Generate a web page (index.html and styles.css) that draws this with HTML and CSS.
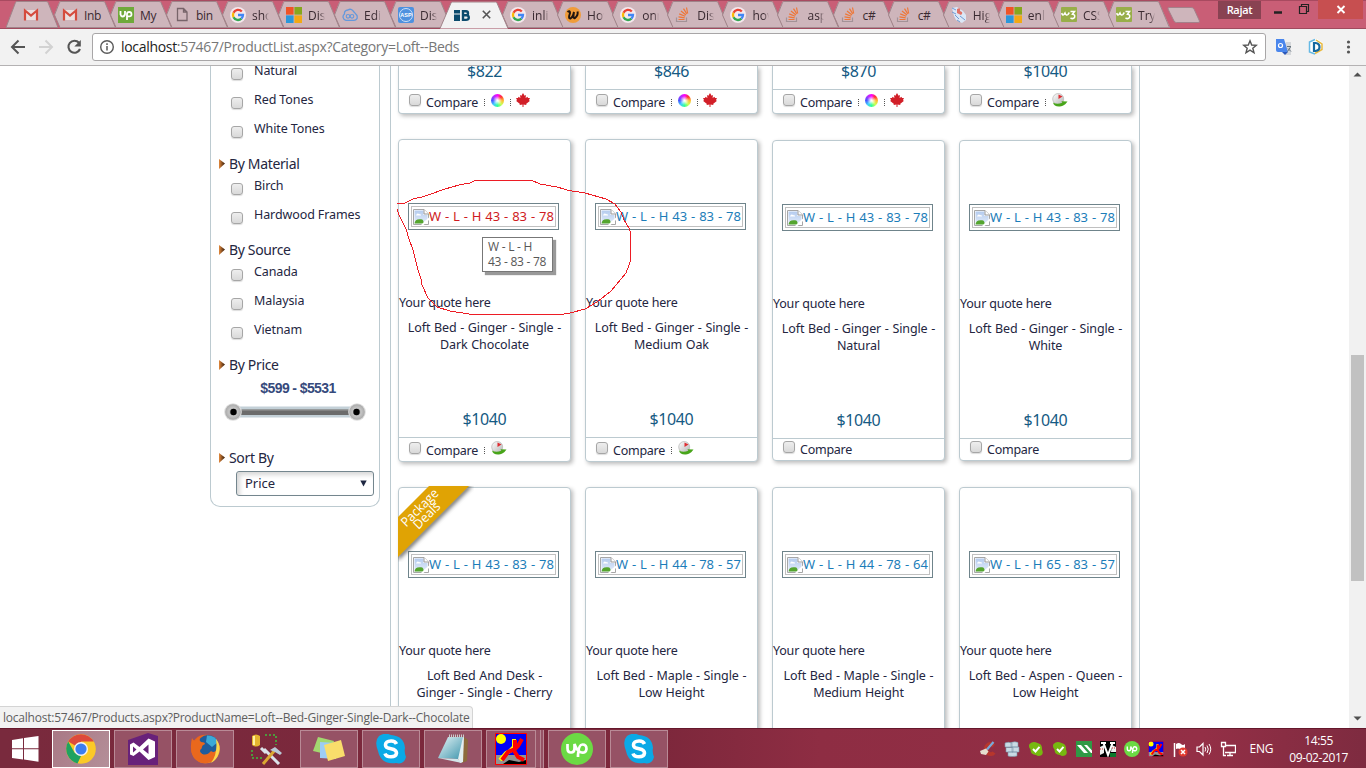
FILE: index.html
```html
<!DOCTYPE html>
<html lang="en">
<head>
<meta charset="utf-8">
<title>Product List</title>
<link rel="stylesheet" href="styles.css">
</head>
<body>
<svg class="defs" width="0" height="0">
  <defs>
    <linearGradient id="gSky" x1="0" y1="0" x2="0" y2="1"><stop offset="0" stop-color="#b4cbee"/><stop offset="1" stop-color="#e4edfb"/></linearGradient>
    <radialGradient id="gKnob"><stop offset="0" stop-color="#8d8d8d"/><stop offset=".55" stop-color="#c4c4c4"/><stop offset="1" stop-color="#a9a9a9"/></radialGradient>
    <linearGradient id="gBall" x1="0" y1="0" x2="1" y2="1"><stop offset="0" stop-color="#fff"/><stop offset="1" stop-color="#b5b5b5"/></linearGradient>
    <linearGradient id="gArrow"><stop offset="0" stop-color="#e58a3c"/><stop offset="1" stop-color="#2d1708"/></linearGradient>
    <linearGradient id="gFox" x1="0" y1="0" x2="1" y2="1"><stop offset="0" stop-color="#e8581c"/><stop offset=".6" stop-color="#ef7d1a"/><stop offset="1" stop-color="#fbd03b"/></linearGradient>
    <linearGradient id="gPad" x1="0" y1="0" x2="1" y2="1"><stop offset="0" stop-color="#e8f5f7"/><stop offset="1" stop-color="#3f96ad"/></linearGradient>
  </defs>
  <symbol id="tab" viewBox="0 0 68 28"><path d="M11.5 1.5H56.5L68 27.500H12L6.500 14.500Z" fill="#ceb5bb"/><path d="M12 27.500L6.500 15L11.500 2.500Q12 1.500 13 1.500H55Q56.500 1.500 57 2.500L67 26.500Q67.500 27.500 68 27.500" fill="none" stroke="#a08389"/><path d="M12 27.500H68" stroke="#a58b91"/></symbol>
  <symbol id="gmail" viewBox="0 0 16 16"><path d="M2 3H14V13H2Z" fill="#eadede"/><path d="M2 13.500V3.500L8 8.500L14 3.500V13.500" fill="none" stroke="#d54b3d" stroke-width="2.200"/></symbol>
  <symbol id="google" viewBox="0 0 16 16"><circle cx="8" cy="8" r="8" fill="#f5e9ee"/><g fill="none" stroke-width="2.300"><path d="M11.800 4.500A5 5 0 0 0 3.500 5.800" stroke="#ea4335"/><path d="M3.500 5.800A5 5 0 0 0 3.500 10.300" stroke="#fbbc05"/><path d="M3.500 10.300A5 5 0 0 0 11.400 11.600" stroke="#34a853"/><path d="M11.400 11.700Q13 10.200 13 8H8" stroke="#4285f4"/></g></symbol>
  <symbol id="ms" viewBox="0 0 16 16"><path d="M0 0H7.600V7.600H0Z" fill="#f05326"/><path d="M8.400 0H16V7.600H8.400Z" fill="#86a71d"/><path d="M0 8.400H7.600V16H0Z" fill="#2c97da"/><path d="M8.400 8.400H16V16H8.400Z" fill="#f2a914"/></symbol>
  <symbol id="so" viewBox="0 0 16 16"><path d="M1.500 10.500V14.500H11.500V10.500" fill="none" stroke="#a39297" stroke-width="1.200"/><g stroke="#ee7738" stroke-width="1.200"><path d="M3.500 12.500H9.500M3.500 9.800L9.700 10.800M4.200 6.900L10.200 9.300M6 4L11 8M8.500 1.700L11.800 6.800M11.500 .500L12.700 6.500"/></g></symbol>
  <symbol id="w3" viewBox="0 0 16 16"><rect width="16" height="15" rx="1" fill="#98ae49"/><path d="M.8 6Q1.300 8.800 3 7.500L4 6Q5 9 7 7.500L8.300 5.500M9.500 4.500H13.500L11.500 7.200Q14.500 7.500 13.500 10.500Q12 12.500 9.500 11" fill="none" stroke="#fff" stroke-width="1.500"/></symbol>
  <symbol id="file" viewBox="0 0 16 16"><path d="M3.500 1.500H9.500L13 5V13.500H3.500ZM9.500 1.500V5H13" fill="none" stroke="#77646a" stroke-width="1.300"/></symbol>
  <symbol id="cloud" viewBox="0 0 16 16"><path d="M4 13.300A3.500 3.500 0 0 1 2.500 7Q2 3.500 6 3Q9 .8 12 5Q13 6 15 8.500Q16 13 12 13.300Z" fill="none" stroke="#6498dc" stroke-width="1.300"/><circle cx="6" cy="9.300" r="1.800" fill="none" stroke="#6498dc" stroke-width="1.100"/><circle cx="10" cy="9.300" r="1.800" fill="none" stroke="#6498dc" stroke-width="1.100"/></symbol>
  <symbol id="asp" viewBox="0 0 16 16"><rect width="16" height="16" rx="2" fill="#4e91df"/><circle cx="8" cy="8" r="6.500" fill="none" stroke="#cfe0f6"/><text x="8" y="10.200" font-size="5.500" font-weight="700" text-anchor="middle" fill="#fff" font-family="Liberation Sans, sans-serif">ASP</text></symbol>
  <symbol id="check" viewBox="0 0 16 16"><path d="M1.500 3Q5-.5 9.500 2Q14.500 3 14 8.500Q16 13 13 14.500Q10 15.500 8 14Q2.500 13.500 2.500 8.500Q0 5.500 1.500 3Z" fill="#77b810"/><path d="M5 8L7.500 10.500L11.500 5.800" fill="none" stroke="#fff" stroke-width="2"/></symbol>
  <symbol id="broken" viewBox="0 0 16 16"><path d="M.5.5H11L15.500 5V15.500H.5Z" fill="#fff" stroke="#a6a6a6"/><path d="M1.500 1.500H10.500V6H14.500V10L9 14.500H1.500Z" fill="url(#gSky)"/><path d="M1.500 14.500Q2 9.500 8 10.300Q11 10.500 10.500 14.500Z" fill="#55a52f"/><path d="M3 6.500Q4 3.500 6 5Q8.500 5 8 6.500Z" fill="#fff"/><path d="M8 16L16 8.500V11L10.500 16Z" fill="#fff"/><path d="M11 .5V5H15.500" fill="#fff" stroke="#999"/></symbol>
  <symbol id="maple" viewBox="0 0 14 14"><path d="M7 0L8.600 2.700L10 2L9.600 5L11.500 3.800L12 5L14 5L13 7L13.800 8L10.300 10.700V12L7.500 11.500V14H6.500V11.500L3.700 12V10.700L.2 8L1 7L0 5H2L2.500 3.800L4.400 5L4 2L5.400 2.700Z" fill="#d21f28"/></symbol>
  <symbol id="source" viewBox="0 0 16 14"><circle cx="6.200" cy="6" r="5.500" fill="url(#gBall)" stroke="#b5b5b5" stroke-width=".7"/><path d="M6.500 1.500L10.500 3.500L6.500 6Z" fill="#df2b31"/><path d="M1 9.500Q2 14 8 13.500Q12.500 13 15.500 8.500L9.500 8.300L10.300 9.700Q5 12 1 9.500Z" fill="#48a51a"/></symbol>
  <symbol id="bullet" viewBox="0 0 6 10"><path d="M0 0L6 4.500L0 10Z" fill="url(#gArrow)"/></symbol>
  <symbol id="skype" viewBox="0 0 30 30"><path d="M3 2Q9-2 15 1Q28 2 29 14Q28 18 30 23Q28 31 20 29Q5 31 2 17Q-2 7 3 2Z" fill="#0ba9e6"/><path d="M20.500 10Q19 6.800 15 7Q9.300 7.200 9.500 11Q9.500 14 15 14.700Q20.500 15.700 20.500 19Q20 22.800 15 22.800Q10 22.800 9 19.500" fill="none" stroke="#fff" stroke-width="3.600"/></symbol>
  <symbol id="upw" viewBox="0 0 32 32"><circle cx="16" cy="16" r="16" fill="#6bda44"/><path d="M6.500 11V15Q6.500 19.500 10 19.500T13.500 15V11Q15.500 17 19 19Q25 21 25.500 16Q25.500 11.500 21.500 11.500T17 22V24" fill="none" stroke="#fff" stroke-width="2.700"/></symbol>
  <symbol id="bug" viewBox="0 0 32 32"><path d="M1 1H31V31H1Z" fill="#0000f8"/><path d="M1 22H31V31H1Z" fill="#929292"/><path d="M8 31L14 27L24 29L31 27V31Z" fill="#000"/><circle cx="6" cy="6" r="5" fill="#ff0"/><path d="M19 6V14L15 18L11 20L5 27" fill="none" stroke="#ff0" stroke-width="4"/><path d="M20 7V15M27 6L23 13L20 16L13 19L7 27M18 16L23 24L29 27" fill="none" stroke="#f00" stroke-width="4"/><path d="M.5.5H31.500V31.500H.5Z" fill="none" stroke="#f00"/></symbol>
</svg>

<header class="tabstrip">
  <div class="tabs">
    <div class="tab tab-pinned"><svg class="shape" preserveAspectRatio="none" viewBox="0 0 54 28"><path d="M0 27.500L9.500 2.500Q10 1.500 11 1.500H40Q41.500 1.500 42 2.500L52 27.500Z" fill="#ceb5bb" stroke="#a08389"/></svg><svg class="fav"><use href="#gmail"/></svg></div>
    <div class="tab"><svg class="shape"><use href="#tab"/></svg><svg class="fav"><use href="#gmail"/></svg><span class="full">Inb</span></div>
    <div class="tab"><svg class="shape"><use href="#tab"/></svg><svg class="fav" viewBox="0 0 16 16"><path d="M0 0H16V16H0Z" fill="#6fa93a"/><path d="M2.500 4V7.500Q3 9.500 4.700 9.500T7 7V4M9 13V7Q9 5 11.200 5T13.500 7.200T11.200 9.400H9" fill="none" stroke="#fff" stroke-width="1.800"/></svg><span class="full">My</span></div>
    <div class="tab"><svg class="shape"><use href="#tab"/></svg><svg class="fav"><use href="#file"/></svg><span class="full">bin</span></div>
    <div class="tab"><svg class="shape"><use href="#tab"/></svg><svg class="fav"><use href="#google"/></svg><span>sho</span></div>
    <div class="tab"><svg class="shape"><use href="#tab"/></svg><svg class="fav"><use href="#ms"/></svg><span>Dis</span></div>
    <div class="tab"><svg class="shape"><use href="#tab"/></svg><svg class="fav"><use href="#cloud"/></svg><span>Edi</span></div>
    <div class="tab"><svg class="shape"><use href="#tab"/></svg><svg class="fav"><use href="#asp"/></svg><span>Dis</span></div>
    <div class="tab tab-active"><svg class="shape" viewBox="0 0 68 28"><path d="M0 28L11 2.500Q11.500 1.500 12.500 1.500H55.500Q56.500 1.500 57 2.500L68 28Z" fill="#f2f2f2"/><path d="M0 28L11 2.500Q11.500 1.500 12.500 1.500H55.500Q56.500 1.500 57 2.500L68 28" fill="none" stroke="#a08389"/></svg><svg class="fav" viewBox="0 0 16 16"><path d="M0 3H6V6.500H0ZM0 7.500H6V14H0Z" fill="#0c4b6d"/><path d="M9 4.200H12Q14 4.200 14 6.200T12 8.300H9ZM9 8.300H12.500Q14.800 8.500 14.800 10.700T12 12.900H9Z" fill="none" stroke="#0c4b6d" stroke-width="2.400"/></svg><svg class="close" viewBox="0 0 9 9"><path d="M.8.800L8.200 8.200M8.200.800L.8 8.200" stroke="#555" stroke-width="1.600"/></svg></div>
    <div class="tab tab-b"><svg class="shape"><use href="#tab"/></svg><svg class="fav"><use href="#google"/></svg><span>inlin</span></div>
    <div class="tab tab-b"><svg class="shape"><use href="#tab"/></svg><svg class="fav" viewBox="0 0 16 16"><circle cx="8" cy="8" r="8" fill="#f09c3a"/><path d="M2.500 5Q5 3 5 6Q3 12 5.500 11.500Q8 10 9 5Q7.500 12 10 11Q13.500 8 12.500 4.500" fill="none" stroke="#201510" stroke-width="2"/></svg><span>How</span></div>
    <div class="tab tab-b"><svg class="shape"><use href="#tab"/></svg><svg class="fav"><use href="#google"/></svg><span>onn</span></div>
    <div class="tab tab-b"><svg class="shape"><use href="#tab"/></svg><svg class="fav"><use href="#so"/></svg><span>Dis</span></div>
    <div class="tab tab-b"><svg class="shape"><use href="#tab"/></svg><svg class="fav"><use href="#google"/></svg><span>hov</span></div>
    <div class="tab tab-b"><svg class="shape"><use href="#tab"/></svg><svg class="fav"><use href="#so"/></svg><span>asp</span></div>
    <div class="tab tab-b"><svg class="shape"><use href="#tab"/></svg><svg class="fav"><use href="#so"/></svg><span class="full">c#</span></div>
    <div class="tab tab-b"><svg class="shape"><use href="#tab"/></svg><svg class="fav"><use href="#so"/></svg><span class="full">c#</span></div>
    <div class="tab tab-b"><svg class="shape"><use href="#tab"/></svg><svg class="fav" viewBox="0 0 16 16"><path d="M1 1L6 0L12 4L15 8V13L11 16L5 13L3 9Z" fill="#dbe7f6"/><path d="M1 1L5 3M1 5L5 7M4 8L8 12M9 9L14 13M6 13L9 15" stroke="#6f9bd4"/><path d="M6 2Q10 0 9 4Q13 5 10 8L6 6Z" fill="#e27267"/></svg><span>Hig</span></div>
    <div class="tab tab-b"><svg class="shape"><use href="#tab"/></svg><svg class="fav"><use href="#ms"/></svg><span>enl</span></div>
    <div class="tab tab-b"><svg class="shape"><use href="#tab"/></svg><svg class="fav"><use href="#w3"/></svg><span>CSS</span></div>
    <div class="tab tab-b"><svg class="shape"><use href="#tab"/></svg><svg class="fav"><use href="#w3"/></svg><span>Try</span></div>
  </div>
  <svg class="newtab" viewBox="0 0 34 16"><path d="M2 .5H24Q26.500.5 27 2L32.500 14Q33 15.500 31 15.500H9.500Q7.500 15.500 7 14L1 2Q.6.500 2 .5Z" fill="#ceb5bb" stroke="#a4808a"/></svg>
  <div class="user">Rajat</div>
  <div class="wbtns">
    <svg width="57" height="20" viewBox="0 0 57 20"><path d="M13 12.500H21" stroke="#222" stroke-width="2.500"/><path d="M38.500 6.500H45.500V13.500H38.500ZM40.500 6V4.500H47.500V11.500H46" fill="none" stroke="#222" stroke-width="1.200"/></svg>
    <svg class="x" width="45" height="19" viewBox="0 0 45 19"><path d="M19.500 6L26.500 13M26.500 6L19.500 13" stroke="#fff" stroke-width="1.900"/></svg>
  </div>
</header>

<div class="toolbar">
  <svg class="nav" width="92" height="38" viewBox="0 0 92 38"><path d="M25 19H12.500M18.500 12.500L12 19L18.500 25.500" fill="none" stroke="#555" stroke-width="2"/><path d="M39 19H51.500M45.500 12.500L52 19L45.500 25.500" fill="none" stroke="#d2d2d2" stroke-width="2"/><path d="M79 14.800A6 6 0 1 0 80 21" fill="none" stroke="#555" stroke-width="2.100"/><path d="M80.800 12V18.500H74.300Z" fill="#555"/></svg>
  <div class="omni">
    <svg width="16" height="16" viewBox="0 0 16 16"><circle cx="8" cy="8" r="6.300" fill="none" stroke="#5a5a5a" stroke-width="1.400"/><path d="M8 7V11.500M8 4.300V5.900" stroke="#5a5a5a" stroke-width="1.500"/></svg>
    <div class="url"><b>localhost</b>:57467/ProductList.aspx?Category=Loft--Beds</div>
    <svg width="16" height="16" viewBox="0 0 16 16"><path d="M8 1.800L9.700 6L14.300 6.300L10.800 9.200L12 13.800L8 11.200L4 13.800L5.200 9.200L1.700 6.300L6.300 6Z" fill="none" stroke="#555" stroke-width="1.400"/></svg>
  </div>
  <svg class="ext" width="100" height="38" viewBox="0 0 100 38"><path d="M20 14H25V27H20L16 23Z" fill="#d5d7da"/><path d="M10 11H18L22 24H12Q10 24 10 22Z" fill="#4a86ec"/><path d="M16 24H22L19 27Z" fill="#2c58b8"/><circle cx="14.500" cy="17.500" r="2" fill="none" stroke="#fff" stroke-width="1.200"/><path d="M21 18.500H25M21.500 23.500L24.500 19M22 20.500L25 23.500" stroke="#66747f"/><path d="M51 11L57 15V22L50 26L44 24V13Z" fill="#fff"/><path d="M50 12L56 16V21.500L49 25.500" fill="none" stroke="#e8b83e" stroke-width="1.500"/><path d="M49 11.500L43.500 14V24L49 26" fill="none" stroke="#65b9e5" stroke-width="1.500"/><path d="M48 15V23H49.500Q53.500 22.500 53.500 19T49.500 15Z" fill="none" stroke="#1668a0" stroke-width="2.200"/><g fill="#555"><circle cx="82.500" cy="14" r="1.600"/><circle cx="82.500" cy="19" r="1.600"/><circle cx="82.500" cy="24" r="1.600"/></g></svg>
</div>

<main class="viewport">
  <div class="page">
    <aside class="filters">
      <label class="opt"><i class="cb"></i>Natural</label>
      <label class="opt"><i class="cb"></i>Red Tones</label>
      <label class="opt"><i class="cb"></i>White Tones</label>
      <h3><svg><use href="#bullet"/></svg>By Material</h3>
      <label class="opt"><i class="cb"></i>Birch</label>
      <label class="opt"><i class="cb"></i>Hardwood Frames</label>
      <h3><svg><use href="#bullet"/></svg>By Source</h3>
      <label class="opt"><i class="cb"></i>Canada</label>
      <label class="opt"><i class="cb"></i>Malaysia</label>
      <label class="opt"><i class="cb"></i>Vietnam</label>
      <h3><svg><use href="#bullet"/></svg>By Price</h3>
      <div class="range">$599 - $5531</div>
      <svg class="slider" viewBox="0 0 142 20"><path d="M9 4.500H133V15.500H9Z" fill="#c3d0d7"/><path d="M9 7.500H133V13H9Z" fill="#6b6b6b"/><path d="M9 8H133" stroke="#999"/><circle cx="9" cy="10" r="8.800" fill="#dedede"/><circle cx="133" cy="10" r="8.800" fill="#dedede"/><circle cx="9" cy="10" r="7.800" fill="url(#gKnob)"/><circle cx="133" cy="10" r="7.800" fill="url(#gKnob)"/><circle cx="9.500" cy="10" r="3.200"/><circle cx="132.500" cy="10" r="3.200"/></svg>
      <h3 class="sort"><svg><use href="#bullet"/></svg>Sort By</h3>
      <div class="select"><span>Price</span><svg width="7" height="7" viewBox="0 0 7 7"><path d="M.3.500H6.700L3.500 6.500Z" fill="#1e2742"/></svg></div>
    </aside>

    <section class="list">
      <div class="row row-cut">
        <article class="card cut"><div class="price">$822</div><footer><i class="cb"></i><span>Compare</span><i class="sep"></i><i class="wheel"></i><i class="sep"></i><svg class="leaf"><use href="#maple"/></svg></footer></article>
        <article class="card cut"><div class="price">$846</div><footer><i class="cb"></i><span>Compare</span><i class="sep"></i><i class="wheel"></i><i class="sep"></i><svg class="leaf"><use href="#maple"/></svg></footer></article>
        <article class="card cut"><div class="price">$870</div><footer><i class="cb"></i><span>Compare</span><i class="sep"></i><i class="wheel"></i><i class="sep"></i><svg class="leaf"><use href="#maple"/></svg></footer></article>
        <article class="card cut"><div class="price">$1040</div><footer><i class="cb"></i><span>Compare</span><i class="sep"></i><svg class="src"><use href="#source"/></svg></footer></article>
      </div>
      <div class="row">
        <article class="card"><a class="thumb hover"><span><svg><use href="#broken"/></svg><em>W - L - H 43 - 83 - 78</em></span></a><p class="quote">Your quote here</p><h2>Loft Bed - Ginger - Single -<br>Dark Chocolate</h2><div class="price">$1040</div><footer><i class="cb"></i><span>Compare</span><i class="sep"></i><svg class="src"><use href="#source"/></svg></footer></article>
        <article class="card"><a class="thumb"><span><svg><use href="#broken"/></svg><em>W - L - H 43 - 83 - 78</em></span></a><p class="quote">Your quote here</p><h2>Loft Bed - Ginger - Single -<br>Medium Oak</h2><div class="price">$1040</div><footer><i class="cb"></i><span>Compare</span><i class="sep"></i><svg class="src"><use href="#source"/></svg></footer></article>
        <article class="card low"><a class="thumb"><span><svg><use href="#broken"/></svg><em>W - L - H 43 - 83 - 78</em></span></a><p class="quote">Your quote here</p><h2>Loft Bed - Ginger - Single -<br>Natural</h2><div class="price">$1040</div><footer><i class="cb"></i><span>Compare</span></footer></article>
        <article class="card low"><a class="thumb"><span><svg><use href="#broken"/></svg><em>W - L - H 43 - 83 - 78</em></span></a><p class="quote">Your quote here</p><h2>Loft Bed - Ginger - Single -<br>White</h2><div class="price">$1040</div><footer><i class="cb"></i><span>Compare</span></footer></article>
      </div>
      <div class="row">
        <article class="card"><svg class="ribbon" viewBox="0 0 76 76"><path d="M0 74L74 0L69 0L0 69Z" fill="#444" class="blur"/><path d="M31 0H71L0 71V31Z" fill="#e0a304"/><g transform="rotate(-45 28 28)" fill="#fff" font-family="Open Sans, sans-serif" font-size="13" text-anchor="middle"><text x="28" y="23.500" textLength="47" lengthAdjust="spacingAndGlyphs">Package</text><text x="27.500" y="34" textLength="32" lengthAdjust="spacingAndGlyphs">Deals</text></g></svg><a class="thumb"><span><svg><use href="#broken"/></svg><em>W - L - H 43 - 83 - 78</em></span></a><p class="quote">Your quote here</p><h2>Loft Bed And Desk -<br>Ginger - Single - Cherry</h2></article>
        <article class="card"><a class="thumb"><span><svg><use href="#broken"/></svg><em>W - L - H 44 - 78 - 57</em></span></a><p class="quote">Your quote here</p><h2>Loft Bed - Maple - Single -<br>Low Height</h2></article>
        <article class="card"><a class="thumb"><span><svg><use href="#broken"/></svg><em>W - L - H 44 - 78 - 64</em></span></a><p class="quote">Your quote here</p><h2>Loft Bed - Maple - Single -<br>Medium Height</h2></article>
        <article class="card"><a class="thumb"><span><svg><use href="#broken"/></svg><em>W - L - H 65 - 83 - 57</em></span></a><p class="quote">Your quote here</p><h2>Loft Bed - Aspen - Queen -<br>Low Height</h2></article>
      </div>
    </section>
  </div>
  <div class="scroll">
    <svg width="9" height="5" viewBox="0 0 9 5"><path d="M.5 4.500L4.500.5L8.500 4.500Z" fill="#505050"/></svg>
    <div class="thumbbar"></div>
    <svg width="9" height="5" viewBox="0 0 9 5"><path d="M.5.500L4.500 4.500L8.500.500Z" fill="#505050"/></svg>
  </div>
  <div class="tip">W - L - H<br>43 - 83 - 78</div>
  <div class="status">localhost:57467/Products.aspx?ProductName=Loft--Bed-Ginger-Single-Dark--Chocolate</div>
</main>

<footer class="taskbar">
  <div class="start"><svg width="27" height="26" viewBox="0 0 27 26"><path d="M0 4L11 2.300V12.300H0ZM12 2.100L26.500 0V12.300H12ZM0 13.300H11V23.500L0 22ZM12 13.300H26.500V25.700L12 23.600Z" fill="#fff"/></svg></div>
  <div class="app on"><svg width="30" height="30" viewBox="0 0 30 30"><circle cx="15" cy="15" r="14.800" fill="#fbc927"/><path d="M15 15L2.200 7.600A14.800 14.800 0 0 1 27.800 7.600H15Z" fill="#dd4a3c"/><path d="M2.200 7.600L8.600 18.700L15 22L11.500 29.400A14.800 14.800 0 0 1 2.200 7.600Z" fill="#1fa261"/><circle cx="15" cy="15" r="7" fill="#f3f3f3"/><circle cx="15" cy="15" r="5.600" fill="#3c7df0"/></svg></div>
  <div class="app"><svg width="30" height="32" viewBox="0 0 30 32"><path d="M0 7L20 0L30 3V32H0Z" fill="#68217a"/><path d="M2 11.500L5.500 9.500L11.500 14L20.500 5.500L27 8.500V24L20.500 27L11.500 18.500L5.500 23L2 21.500ZM5 13.500V19.500L8.500 16.500ZM20.500 11.500L15 16.500L20.500 21Z" fill="#fff" fill-rule="evenodd"/></svg></div>
  <div class="app"><svg width="30" height="30" viewBox="0 0 30 30"><circle cx="15.500" cy="15" r="14.300" fill="url(#gFox)"/><circle cx="18" cy="11.500" r="10.500" fill="#1f5c9c"/><path d="M17 1.500Q25 1 28 8L22 13L16 8Z" fill="#3ba9d8"/><path d="M2 4Q4 8 6 6Q8 3 10 3Q8.500 6 11 8Q15 8 15 10Q11 12 12 14Q8 17 12 20Q17 22 21 17Q25 20 27 14Q29 24 21 28Q11 32 4 24Q-1 16 2 4Z" fill="#e9681d"/><path d="M26 5Q31 11 29 18Q27 26 21 29Q28 20 26 5Z" fill="#fcd74d"/></svg></div>
  <div class="app plain"><svg width="32" height="32" viewBox="0 0 32 32"><path d="M1 3Q5 0 9 3V12Q5 15 1 12Z" fill="#e5b52f"/><path d="M2 3H4V12H2Z" fill="#fff2a0"/><path d="M14 2H25V12M1 17V25H11" fill="none" stroke="#3fbf3d" stroke-width="1.500" stroke-dasharray="2 2"/><path d="M13 16L28 31M10 15L15 20" stroke="#dce3ea" stroke-width="3"/><path d="M12 31L24 17" stroke="#dba832" stroke-width="3"/><path d="M19 17L24 14L31 20L29 22L24 19" fill="#b9c8d6"/></svg></div>
  <div class="app"><svg width="34" height="28" viewBox="0 0 34 28"><path d="M6 2L22 6L18 20L1 16Z" fill="#a3d870"/><path d="M8 7L24 8V24L8 23Z" fill="#9dcdf3"/><path d="M12 10L29 5L33 21L16 26Z" fill="#f9de6b"/></svg></div>
  <div class="app"><svg width="30" height="30"><use href="#skype"/></svg></div>
  <div class="app"><svg width="32" height="30" viewBox="0 0 32 30"><path d="M27 3L31 6L30 27L25 29Z" fill="#8d6a3c"/><path d="M11 3L27 3L26 28L23 29Z" fill="#e3eef0"/><path d="M11 3H26L21 25L1 24Z" fill="url(#gPad)"/><path d="M1 24L21 25L25 29L20 28Z" fill="#d3e5e9"/><path d="M12 2H27" stroke="#ccc" stroke-width="3" stroke-dasharray="1 1"/></svg></div>
  <div class="app multi"><svg width="32" height="32"><use href="#bug"/></svg></div>
  <div class="app"><svg width="32" height="32"><use href="#upw"/></svg></div>
  <div class="app"><svg width="30" height="30"><use href="#skype"/></svg></div>
  <div class="tray">
    <svg viewBox="0 0 16 16"><path d="M15 3.500Q12 0 8 1.500Q3.500 4 4 9Q5.500 15 11 15Q14 15 15.500 12.500L12.500 10.500Q10.500 12 8.500 10Q7 7 9.500 5.500Q11.500 4.500 12.500 6.500Z" fill="#b7362c"/><path d="M13.500 1L7 8.500" stroke="#78aadb" stroke-width="2.200"/><path d="M0 10L6 7.500L8.500 10.500L6 14L1 13Z" fill="#e5dfcf"/></svg>
    <svg viewBox="0 0 16 16"><g fill="#c9dbe5" stroke="#7995a8" stroke-width=".6"><path d="M1 2Q4 .5 8 2V6H1ZM7 1.500Q11 0 14 1.500V6H7ZM2 6.500H9V11H2ZM8 6H15V11H8ZM4 11H13V15Q8 16 4 15Z"/></g></svg>
    <svg viewBox="0 0 16 16"><use href="#check"/></svg>
    <svg viewBox="0 0 16 16"><use href="#check"/></svg>
    <svg viewBox="0 0 16 16"><path d="M0 0H16V16H0Z" fill="#2f9945"/><path d="M1 4H5L12 12H8ZM8 4H11L16 9.500V12H15Z" fill="#fff"/></svg>
    <svg viewBox="0 0 16 16"><path d="M0 0H16V16H0Z" fill="#000"/><path d="M0 6L4 4V12L0 14ZM12 4L16 6V11H11Z" fill="#eee"/><path d="M1 2H6M10 2H15M3.500 2L8 14L12.500 2" fill="none" stroke="#fff" stroke-width="2"/><path d="M0 8H4M12 7H16" stroke="#c22" stroke-dasharray="1 1"/><path d="M10 12H16V16H10Z" fill="#0a7a2c"/></svg>
    <svg><use href="#upw"/></svg>
    <svg><use href="#bug"/></svg>
    <svg viewBox="0 0 16 16"><path d="M2.500 2V16" stroke="#fff" stroke-width="1.500"/><path d="M4 3Q7 1 9 3Q11 5 13 3V9Q10 10 8 8Q6 7 4 8Z" fill="#fff"/><circle cx="11" cy="11" r="4.500" fill="#e23b30"/><path d="M9 9L13 13M13 9L9 13" stroke="#fff" stroke-width="1.500"/></svg>
    <svg viewBox="0 0 16 16"><path d="M1 6H3.500L7 2.500V14L3.500 10.500H1Z" fill="none" stroke="#fff" stroke-width="1.200"/><path d="M9 6Q10.500 8 9 10.500M11 4.500Q13.500 8 11 12M13 3Q16.500 8 13 13.500" fill="none" stroke="#fff"/></svg>
    <svg viewBox="0 0 16 16"><path d="M6 4.500H15.500V11.500H5M10 12V14.500M7 14.500H13M1.500 1.500H5.500V5.500H1.500ZM3.500 5.500V14.500H6" fill="none" stroke="#fff" stroke-width="1.300"/></svg>
  </div>
  <div class="lang">ENG</div>
  <div class="clock">14:55<br>09-02-2017</div>
</footer>

<svg class="scribble" viewBox="0 0 1366 768"><path d="M397 203.500H404L413 199L424 196.500L445 189L459 185L470 183L475 180.500H532L540 184L557 187L569 190.500L585 193L606 199L615 204L621 212L624 220L629 228L630.500 233V261L626 273L621 279L611 291L597 302L585 309L570 313L561 314.500H472L450 311L437 307L428 298L422 285L421 279L418 270L413 250L409 239L406 229L399 215L397 209" fill="none" stroke="#ed1c24"/></svg>
</body>
</html>
```
FILE: styles.css
```css
* { box-sizing: border-box; }
body { margin: 0; width: 1366px; height: 768px; overflow: hidden; display: flex; flex-direction: column; font-family: "Noto Sans", "Open Sans", sans-serif; background: #fff; color: #24263f; position: relative; }
.defs { position: absolute; }
i, em { font-style: normal; }

/* Window frame and tabs */
.tabstrip { height: 29px; flex: none; display: flex; background: #c95e76; border-top: 1px solid #a84a60; padding-left: 6px; box-shadow: inset 0 -1px #a04a5e; font-family: "Open Sans", sans-serif; }
.tabs { display: flex; height: 28px; width: 1162px; flex: none; }
.tab { position: relative; width: 56px; flex: none; padding: 6px 0 0 14px; display: flex; gap: 6px; }
.tab-pinned { width: 42px; padding-left: 17px; }
.tab-b { width: 55.100px; }
.tab .shape { position: absolute; left: 0; top: -1px; width: 68px; height: 28px; }
.tab-pinned .shape { width: 54px; }
.tab-active { width: 56px; z-index: 2; }
.tab-active .shape { height: 29px; }
.fav { position: relative; width: 16px; height: 16px; flex: none; }
.tab span { position: relative; width: 17px; overflow: hidden; white-space: nowrap; font-size: 12px; line-height: 17px; color: #3a2a31; -webkit-mask-image: linear-gradient(90deg, #000 70%, transparent); mask-image: linear-gradient(90deg, #000 70%, transparent); }
.tab .full { width: auto; overflow: visible; letter-spacing: -.3px; -webkit-mask-image: none; mask-image: none; }
.close { position: relative; width: 9px; height: 9px; margin: 3px 0 0 6px; flex: none; }
.newtab { width: 34px; height: 16px; margin: 6px 0 0 -1px; flex: none; }
.user { width: 43px; height: 18px; margin-left: 17px; background: #894252; color: #fff; font-size: 11px; font-weight: 600; line-height: 17px; letter-spacing: -.3px; text-align: center; }
.wbtns { display: flex; align-items: flex-start; }
.wbtns svg { margin-top: -1px; }
.wbtns .x { background: #c74f50; }

.toolbar { height: 37px; flex: none; display: flex; align-items: flex-start; background: #f2f2f2; border-bottom: 1px solid #b4b2b3; }
.nav, .ext { margin-top: -1px; flex: none; }
.omni { width: 1174px; height: 28px; margin-top: 4px; display: flex; align-items: center; gap: 6px; padding: 0 7px 0 6px; border: 1px solid #a8a6a7; border-radius: 3px; background: #fff; flex: none; }
.url { flex: 1; font: 14px/26px "Open Sans", sans-serif; color: #777; letter-spacing: -.31px; }
.url b { font-weight: 400; color: #222; }

/* Page */
.viewport { position: relative; height: 662px; flex: none; display: flex; overflow: hidden; background: #fff; }
.page { width: 1349px; display: flex; align-items: flex-start; padding-left: 210px; gap: 10px; }
.filters { width: 170px; height: 451px; margin-top: -10px; border: 1px solid #bccad0; border-top: 0; border-radius: 0 0 10px 10px; padding: 0 5px 0 8px; font-size: 12.500px; letter-spacing: -.1px; }
.opt { height: 29px; display: flex; align-items: center; gap: 11px; padding-left: 12px; }
.cb { width: 12px; height: 12px; flex: none; border: 1px solid #a6a6a6; border-radius: 3px; background: linear-gradient(#eee, #d9d9d9); box-shadow: 0 1px 1px #ddd; }
.opt .cb { margin-top: 6px; }
h3 { height: 28px; margin: 0; padding-top: 14px; display: flex; gap: 4px; align-items: center; font-size: 14px; font-weight: 400; line-height: 14px; letter-spacing: -.35px; }
h3 svg { width: 6px; height: 10px; }
.range { margin: 6px 0 4px 3px; height: 20px; font: bold 14px/20px "Liberation Sans", sans-serif; color: #364a7c; text-align: center; letter-spacing: -.6px; }
.slider { display: block; width: 142px; height: 20px; margin-left: 5px; }
.sort { margin-top: 16px; padding-top: 12px; }
.select { width: 138px; height: 25px; margin: 5px 0 0 17px; padding: 0 6px 1px 8px; display: flex; justify-content: space-between; align-items: center; border: 1px solid #74868e; border-radius: 3px; box-shadow: inset 3px 3px 4px #d8d8d8; font-size: 13px; letter-spacing: 0; }

.list { width: 750px; height: 662px; border: solid #bccad0; border-width: 0 1px; padding-left: 7px; }
.row { display: flex; gap: 14px; height: 323px; margin-bottom: 25px; }
.row-cut { height: 48px; }
.card { position: relative; width: 173px; height: 323px; border: 1px solid #bccad0; border-radius: 4px; box-shadow: 2px 2px 4px #bbb; display: flex; flex-direction: column; background: #fff; flex: none; }
.cut { height: 48px; border-top: 0; border-radius: 0 0 4px 4px; }
.low { margin-top: 1px; height: 321px; }
.thumb { display: block; width: 151px; height: 27px; margin: 63px 0 0 9px; padding: 2px; border: 1px solid #6f848b; }
.thumb > span { display: flex; height: 21px; padding: 1px; border: 1px solid #c0c0c0; color: #1c7db9; overflow: hidden; }
.thumb svg { width: 16px; height: 16px; margin-top: 1px; flex: none; }
.thumb em { font-size: 13px; line-height: 17px; white-space: nowrap; word-spacing: .500px; }
.hover > span { color: #cf1b22; }
.quote { margin: 63px 0 6px; font-size: 12.500px; line-height: 20px; letter-spacing: -.2px; }
h2 { margin: 0; height: 34px; font-size: 12.500px; line-height: 17px; font-weight: 400; text-align: center; white-space: nowrap; letter-spacing: -.1px; word-spacing: .500px; }
.price { margin: 56px 0 8px; height: 20px; font-size: 16px; line-height: 20px; letter-spacing: -.4px; text-align: center; color: #155a83; }
.cut .price { margin: -5px 0 8px; }
.card footer { height: 24px; border-top: 1px solid #bccad0; display: flex; align-items: flex-start; padding-left: 10px; font-size: 12.500px; letter-spacing: -.25px; }
footer .cb { margin: 4px 5px 0 0; }
.card footer span { width: 55px; line-height: 26px; }
.low footer span { line-height: 22px; }
.low footer .cb { margin-top: 2px; }
.sep { width: 1px; height: 7px; margin: 9px 0 0 3px; background: repeating-linear-gradient(#555 0 1px, transparent 1px 2px); }
.wheel { width: 13px; height: 13px; margin: 4px 3px 0 6px; border-radius: 50%; background: radial-gradient(circle, #fff 5%, transparent 50%), conic-gradient(#f0f, #f33, #fb3, #cf5, #3f9, #4cf, #45f, #a3f, #f0f); }
.leaf { width: 14px; height: 14px; margin: 3px 0 0 5px; }
.src { width: 16px; height: 14px; margin: 3px 0 0 6px; }
.ribbon { position: absolute; left: -1px; top: -2px; width: 76px; height: 76px; }
.blur { filter: blur(2px); }

.scroll { width: 17px; display: flex; flex-direction: column; align-items: center; background: #f1f1f1; padding: 6px 0 7px; }
.thumbbar { width: 13px; height: 226px; margin: 278px 0 auto; background: #c1c1c1; }
.tip { position: absolute; left: 482px; top: 171px; width: 71px; height: 35px; padding: 1px 5px; border: 1px solid #777; background: #fff; box-shadow: 3px 3px 1px #999; color: #575757; font: 12px/15px "Open Sans", sans-serif; letter-spacing: -.3px; word-spacing: .100px; white-space: nowrap; }
.status { position: absolute; left: 0; bottom: 0; width: 473px; height: 22px; padding-left: 3px; border: 1px solid #d4d4d4; border-width: 1px 1px 0 0; border-radius: 0 4px 0 0; background: #f2f2f2; color: #5e5e5e; font: 12px/21px "Open Sans", sans-serif; letter-spacing: -.22px; white-space: nowrap; }

/* Taskbar */
.taskbar { height: 40px; flex: none; display: flex; align-items: center; background: linear-gradient(90deg, #792a3d, #7c273b 48%, #8e2d43 60%, #942f46 88%, #7e2b40); border-top: 1px solid #65182c; color: #fff; font-family: "Open Sans", sans-serif; }
.start { width: 52px; padding-left: 12px; display: flex; }
.app { width: 58px; height: 38px; margin-right: 4px; flex: none; display: flex; align-items: center; justify-content: center; background: #965265; border: 1px solid #b98a96; }
.on { background: linear-gradient(120deg, #a97885, #b48f99); border: 1px solid #fff; }
.plain { background: none; border-color: transparent; }
.app.multi { width: 50px; margin-right: 12px; box-shadow: 4px 0 #965265, 5px 0 #b98a96, 7px 0 #965265, 8px 0 #b98a96; }
.tray { display: flex; gap: 8.100px; margin-left: 308px; }
.tray svg { width: 16px; height: 16px; flex: none; }
.lang { margin-left: 13px; font-size: 12px; width: 25px; letter-spacing: -.2px; }
.clock { width: 90px; margin-left: auto; margin-right: 3px; text-align: center; font-size: 12px; line-height: 17px; letter-spacing: -.4px; }
.scribble { position: absolute; left: 0; top: 0; width: 1366px; height: 768px; pointer-events: none; shape-rendering: crispEdges; }
```
